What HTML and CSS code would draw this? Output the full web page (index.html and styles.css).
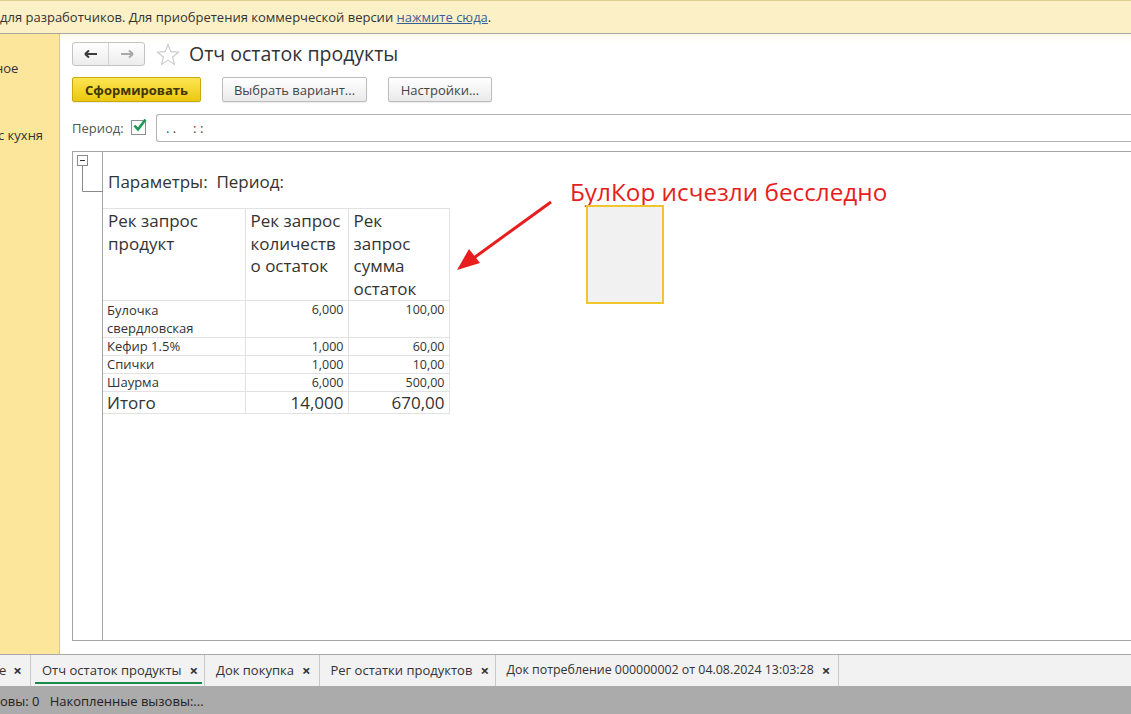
FILE: index.html
```html
<!DOCTYPE html>
<html lang="ru">
<head>
<meta charset="utf-8">
<title>Отч остаток продукты</title>
<link rel="stylesheet" href="styles.css">
</head>
<body>
<div class="banner">для разработчиков. Для приобретения коммерческой версии <a class="link" href="#">нажмите сюда</a>.</div>
<div class="middle">
  <div class="sidebar">
    <div class="side-item first">ное</div>
    <div class="side-item shift">с кухня</div>
  </div>
  <div class="main">
    <div class="head-row">
      <div class="nav">
        <div class="nav-btn"><svg width="14" height="10" viewBox="0 0 14 10"><path d="M1 5H13M1 5L5 1.5M1 5L5 8.5" stroke="#3c3c3c" stroke-width="2" fill="none"/></svg></div>
        <div class="nav-btn"><svg width="14" height="10" viewBox="0 0 14 10"><path d="M13 5H1M13 5L9 1.5M13 5L9 8.5" stroke="#a8a8a8" stroke-width="2" fill="none"/></svg></div>
      </div>
      <svg class="star" width="24" height="23" viewBox="0 0 24 23"><path d="M12 1.5L14.9 8.6L22.5 9.1L16.6 14L18.5 21.4L12 17.3L5.5 21.4L7.4 14L1.5 9.1L9.1 8.6Z" fill="none" stroke="#c9c9c9" stroke-width="1.1"/></svg>
      <h1 class="title">Отч остаток продукты</h1>
    </div>
    <div class="btn-row">
      <button class="btn primary">Сформировать</button>
      <button class="btn">Выбрать вариант...</button>
      <button class="btn">Настройки...</button>
    </div>
    <div class="period-row">
      <span class="label">Период:</span>
      <span class="check"><svg width="17" height="17" viewBox="0 0 17 17"><path d="M3.5 8.5L7 12.5L14.5 2.5" stroke="#1d9a55" stroke-width="2.6" fill="none"/></svg></span>
      <div class="field">.&nbsp;.&nbsp;&nbsp;&nbsp;&nbsp;&nbsp;:&nbsp;:</div>
    </div>
    <div class="report">
      <div class="gutter">
        <svg width="30" height="44" viewBox="0 0 30 44"><rect x="4.5" y="4.5" width="10" height="10" fill="#fff" stroke="#8a8a8a"/><path d="M7 9.5H12" stroke="#333"/><path d="M9.5 14.5V40.5H30" stroke="#8a8a8a" fill="none"/></svg>
      </div>
      <div class="sheet">
        <div class="params">Параметры:&nbsp; Период:</div>
        <table class="grid">
          <colgroup><col class="c1"><col class="c2"><col class="c3"></colgroup>
          <thead>
            <tr><th>Рек запрос продукт</th><th>Рек запрос количеств о остаток</th><th class="narrow">Рек запрос сумма остаток</th></tr>
          </thead>
          <tbody>
            <tr class="tall"><td>Булочка свердловская</td><td class="num">6,000</td><td class="num">100,00</td></tr>
            <tr><td>Кефир 1.5%</td><td class="num">1,000</td><td class="num">60,00</td></tr>
            <tr><td>Спички</td><td class="num">1,000</td><td class="num">10,00</td></tr>
            <tr><td>Шаурма</td><td class="num">6,000</td><td class="num">500,00</td></tr>
            <tr class="total"><td>Итого</td><td class="num">14,000</td><td class="num">670,00</td></tr>
          </tbody>
        </table>
      </div>
      <div class="note">БулКор исчезли бесследно</div>
      <svg class="arrow" width="110" height="80" viewBox="0 0 110 80"><path d="M96 3L16 61" stroke="#e81e1e" stroke-width="3" fill="none"/><path d="M2 71L14 50L25 64Z" fill="#e81e1e"/></svg>
      <div class="frame"></div>
    </div>
  </div>
</div>
<div class="tabs">
  <div class="tab first"><span>е</span><span class="x">×</span></div>
  <div class="tab active"><span>Отч остаток продукты</span><span class="x">×</span></div>
  <div class="tab"><span>Док покупка</span><span class="x">×</span></div>
  <div class="tab reg"><span>Рег остатки продуктов</span><span class="x">×</span></div>
  <div class="tab long"><span>Док потребление 000000002 от 04.08.2024 13:03:28</span><span class="x">×</span></div>
</div>
<div class="status">овы: 0&nbsp;&nbsp; Накопленные вызовы:...</div>
</body>
</html>
```
FILE: styles.css
```css
* { box-sizing: border-box; }
html, body { margin: 0; padding: 0; }
body {
  width: 1131px;
  height: 714px;
  overflow: hidden;
  font-family: "Open Sans", "DejaVu Sans", sans-serif;
  color: #333;
  background: #fff;
}
.banner {
  height: 34px;
  background: #fcf1c6;
  border-top: 1px solid #ddd08a;
  border-bottom: 1px solid #a8a8a0;
  font-size: 13px;
  line-height: 32px;
  color: #333;
  white-space: nowrap;
}
.link { color: #3b5c95; text-decoration: underline; }
.middle {
  display: flex;
  height: 620px;
}
.sidebar {
  width: 60px;
  flex: none;
  background: #fbe69c;
  border-right: 1px solid #d9c98c;
  font-size: 13px;
  color: #333;
  white-space: nowrap;
  overflow: hidden;
  padding-top: 24px;
}
.side-item { height: 67px; line-height: 20px; }
.side-item.first { margin-left: -5px; }
.shift { margin-left: -2px; }
.main {
  flex: 1;
  min-width: 0;
  padding-left: 12px;
  background: linear-gradient(#fdf8e8 0, #fff 8px);
  overflow: hidden;
}
.head-row {
  display: flex;
  align-items: center;
  margin-top: 8px;
  height: 23px;
}
.nav {
  display: flex;
  width: 73px;
  height: 24px;
  border: 1px solid #c3c3c3;
  border-radius: 3px;
  background: linear-gradient(#ffffff, #ececec);
}
.nav-btn {
  flex: 1;
  display: flex;
  align-items: center;
  justify-content: center;
}
.nav-btn + .nav-btn { border-left: 1px solid #d3d3d3; }
.star { margin-left: 11px; margin-top: 2px; }
.title {
  margin: 0 0 0 9px;
  font-size: 19.5px;
  font-weight: normal;
  color: #333;
  line-height: 24px;
}
.btn-row {
  display: flex;
  margin-top: 12px;
  height: 25px;
  gap: 21px;
}
.btn {
  font-family: "Open Sans", "DejaVu Sans", sans-serif;
  font-size: 13px;
  color: #444;
  height: 25px;
  padding: 0;
  white-space: nowrap;
  border: 1px solid #bdbdbd;
  border-radius: 2px;
  background: linear-gradient(#ffffff, #eaeaea);
  box-shadow: 0 1px 1px rgba(0,0,0,0.08);
}
.btn.primary {
  font-weight: bold;
  color: #403600;
  width: 129px;
  border-color: #c9a90c;
  background: linear-gradient(#fde453, #ecc811);
}
.btn:nth-child(2) { width: 145px; }
.btn:nth-child(3) { width: 104px; }
.period-row {
  display: flex;
  align-items: center;
  margin-top: 12px;
  height: 28px;
}
.label { font-size: 13px; color: #555; width: 59px; }
.check {
  width: 15px;
  height: 15px;
  border: 1px solid #8f8f8f;
  background: #fff;
  position: relative;
  margin-top: -1px;
}
.check svg { position: absolute; left: -1px; top: -4px; }
.field {
  margin-left: 10px;
  flex: 1;
  height: 28px;
  border: 1px solid #b3b3b3;
  border-right: none;
  border-radius: 3px 0 0 3px;
  font-size: 13px;
  line-height: 26px;
  padding-left: 9px;
  color: #444;
  margin-right: -4px;
}
.report {
  position: relative;
  display: flex;
  margin-top: 9px;
  height: 490px;
  border: 1px solid #a3a3a3;
  border-right: none;
  margin-right: -4px;
}
.gutter {
  width: 30px;
  flex: none;
  border-right: 1px solid #a3a3a3;
  margin-top: -1px;
}
.gutter svg { display: block; overflow: visible; }
.sheet { flex: 1; }
.params {
  font-size: 17px;
  line-height: 22px;
  margin-top: 19px;
  padding-left: 5px;
  color: #333;
}
.grid {
  margin-top: 15px;
  border-collapse: collapse;
  table-layout: fixed;
  width: 346px;
}
.c1 { width: 142px; }
.c2 { width: 103px; }
.c3 { width: 101px; }
.grid th, .grid td {
  border: 1px solid #e2e2e2;
  vertical-align: top;
  text-align: left;
}
.grid tr > :first-child { border-left: none; }
.grid th {
  font-weight: normal;
  font-size: 17px;
  line-height: 22.5px;
  padding: 1px 5px 0 5px;
  height: 92px;
  color: #333;
}
.grid th.narrow { padding-right: 10px; }
.grid td {
  font-size: 13px;
  line-height: 17px;
  padding: 0 4px 0 4px;
  color: #333;
}
.grid .tall td { line-height: 18px; }
.grid td.num { text-align: right; font-size: 12.5px; }
.grid .total td, .grid .total td.num {
  font-size: 17px;
  line-height: 21px;
  padding-top: 0;
}
.note {
  position: absolute;
  left: 497px;
  top: 25px;
  font-size: 24.3px;
  line-height: 30px;
  color: #e61e1e;
  white-space: nowrap;
}
.arrow {
  position: absolute;
  left: 382px;
  top: 47px;
}
.frame {
  position: absolute;
  left: 513px;
  top: 53px;
  width: 78px;
  height: 99px;
  border: 2px solid #f1c52c;
  background: #f1f1f1;
}
.tabs {
  display: flex;
  height: 32px;
  background: #f2f2f2;
  border-top: 1px solid #a9a9a9;
}
.tab {
  display: flex;
  align-items: center;
  font-size: 13px;
  color: #333;
  padding: 0 8px 2px 11px;
  border-right: 1px solid #c8c8c8;
  white-space: nowrap;
  position: relative;
}
.tab.first { width: 32px; padding-left: 0; margin-left: -1px; }
.tab .x { font-size: 15px; margin-left: 8px; color: #333; font-weight: bold; }
.tab.first .x { margin-left: 7px; }
.tab.active { width: 174px; padding-left: 11px; }
.tab.reg { width: 176px; }
.tab.long { font-size: 12.4px; width: 343px; }
.tab.active::after {
  content: "";
  position: absolute;
  left: 4px;
  right: 2px;
  bottom: 2px;
  height: 2px;
  background: #1b8b4e;
}
.status {
  height: 28px;
  background: #ababab;
  font-size: 13px;
  line-height: 30px;
  color: #222;
  white-space: nowrap;
}
```
